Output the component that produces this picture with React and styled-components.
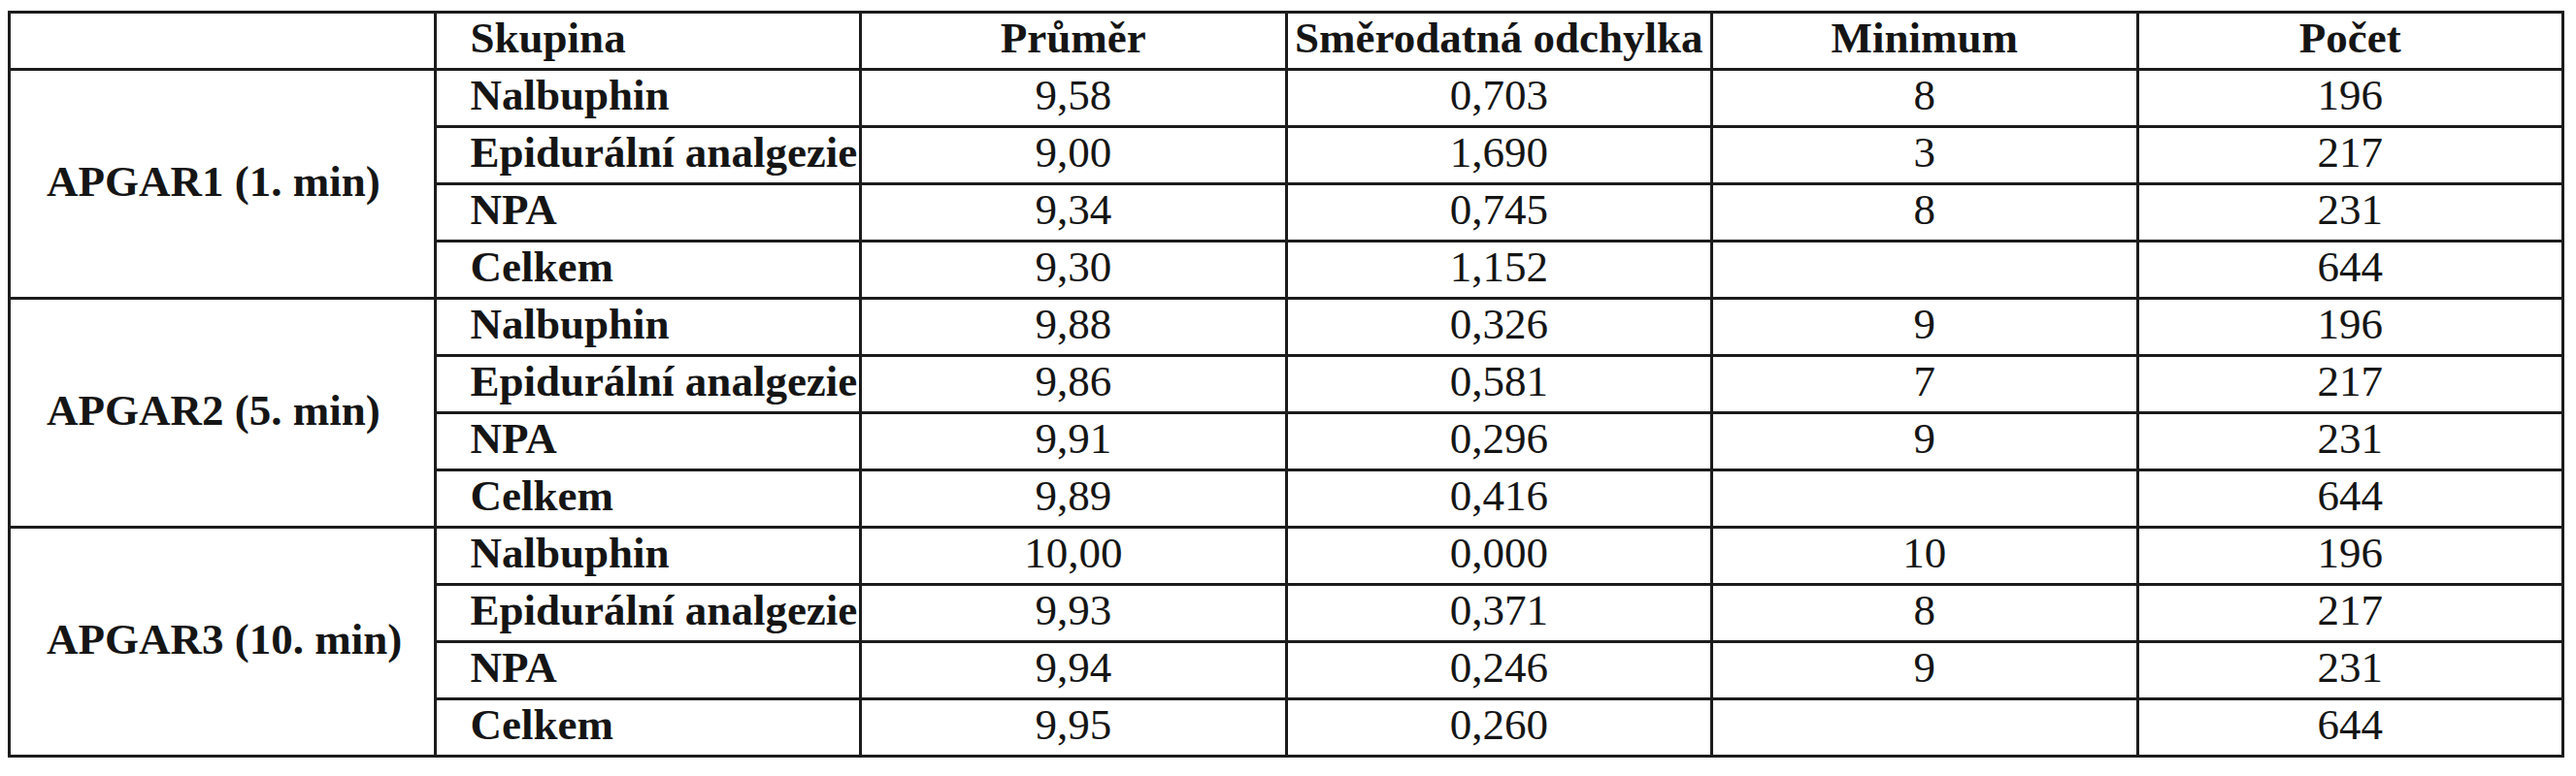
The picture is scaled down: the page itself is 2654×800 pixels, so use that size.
import React from "react";
import styled, { createGlobalStyle } from "styled-components";

const Global = createGlobalStyle`
  html, body { margin: 0; padding: 0; background: #fff; }
  body { font: 16px 'Liberation Serif', serif; }
`;

const Grid = styled.div`
  display: grid;
  grid-template-columns: repeat(6, 438.5px);
  grid-auto-rows: 59px;
  margin: 11px 0 0 8px;
  width: max-content;
  border-top: 3px solid #1c1c1c;
  border-left: 3px solid #1c1c1c;
`;

const Cell = styled.div`
  position: relative;
  display: flex;
  align-items: center;
  justify-content: ${(p) => (p.$left ? "flex-start" : "center")};
  padding: 0 0 6px ${(p) => (p.$left ? (p.$group ? "37px" : "35px") : "0")};
  box-sizing: border-box;
  border-right: 3px solid #1c1c1c;
  border-bottom: 3px solid #1c1c1c;
  font: ${(p) => (p.$bold ? 700 : 400)} 45px 'Liberation Serif', serif;
  color: #151515;
  white-space: nowrap;
  grid-row: ${(p) => (p.$span ? `span ${p.$span}` : "auto")};
  ${(p) =>
    p.$last &&
    `
    &::after {
      content: '';
      position: absolute;
      right: -3px;
      bottom: -7px;
      width: 3px;
      height: 4px;
      background: #1c1c1c;
    }
  `}
`;

const groups = [
  {
    label: "APGAR1 (1. min)",
    rows: [
      ["Nalbuphin", "9,58", "0,703", "8", "196"],
      ["Epidurální analgezie", "9,00", "1,690", "3", "217"],
      ["NPA", "9,34", "0,745", "8", "231"],
      ["Celkem", "9,30", "1,152", "", "644"],
    ],
  },
  {
    label: "APGAR2 (5. min)",
    rows: [
      ["Nalbuphin", "9,88", "0,326", "9", "196"],
      ["Epidurální analgezie", "9,86", "0,581", "7", "217"],
      ["NPA", "9,91", "0,296", "9", "231"],
      ["Celkem", "9,89", "0,416", "", "644"],
    ],
  },
  {
    label: "APGAR3 (10. min)",
    rows: [
      ["Nalbuphin", "10,00", "0,000", "10", "196"],
      ["Epidurální analgezie", "9,93", "0,371", "8", "217"],
      ["NPA", "9,94", "0,246", "9", "231"],
      ["Celkem", "9,95", "0,260", "", "644"],
    ],
  },
];

const headers = ["Průměr", "Směrodatná odchylka", "Minimum", "Počet"];

export default function App() {
  return (
    <>
      <Global />
      <Grid>
        <Cell />
        <Cell $left $bold>Skupina</Cell>
        {headers.map((h) => (
          <Cell key={h} $bold>{h}</Cell>
        ))}
        {groups.map((g, gi) => (
          <React.Fragment key={g.label}>
            {g.rows.map((r, ri) => {
              const isLast = gi === groups.length - 1 && ri === g.rows.length - 1;
              return (
                <React.Fragment key={ri}>
                  {ri === 0 && (
                    <Cell $left $group $bold $span={4} $last={gi === groups.length - 1}>
                      {g.label}
                    </Cell>
                  )}
                  <Cell $left $bold $last={isLast}>{r[0]}</Cell>
                  {r.slice(1).map((v, i) => (
                    <Cell key={i} $last={isLast}>{v}</Cell>
                  ))}
                </React.Fragment>
              );
            })}
          </React.Fragment>
        ))}
      </Grid>
    </>
  );
}
